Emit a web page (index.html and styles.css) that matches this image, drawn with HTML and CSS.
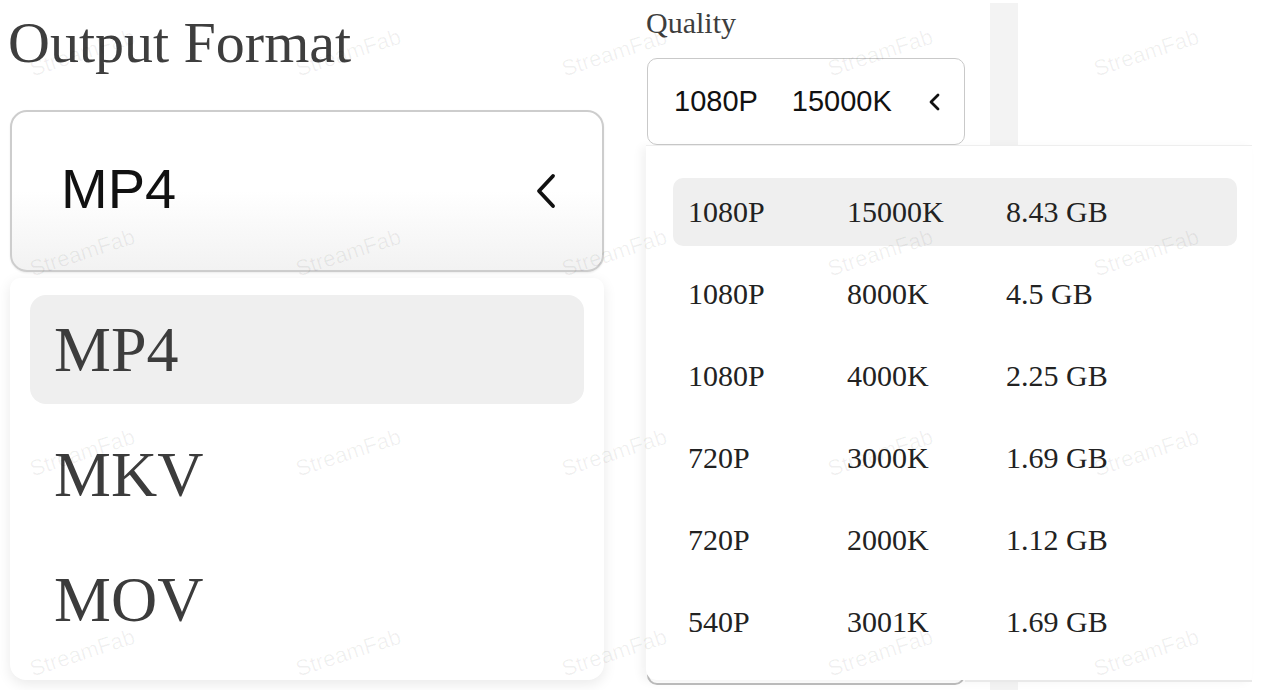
FILE: index.html
```html
<!DOCTYPE html>
<html lang="en">
<head>
<meta charset="utf-8">
<title>Output Format &amp; Quality</title>
<link rel="stylesheet" href="styles.css">
</head>
<body>
<div class="page">
  <section class="left">
    <h1 class="title">Output Format</h1>
    <div class="select big">
      <span class="value">MP4</span>
      <svg class="chev" width="22" height="36" viewBox="0 0 22 36"><polyline points="18,3 4,18 18,33" fill="none" stroke="#111" stroke-width="3.8" stroke-linecap="round" stroke-linejoin="round"/></svg>
    </div>
    <ul class="menu big-menu">
      <li class="opt active">MP4</li>
      <li class="opt">MKV</li>
      <li class="opt">MOV</li>
    </ul>
  </section>
  <section class="right">
    <div class="top-row">
      <div class="q-col">
        <h2 class="q-title">Quality</h2>
        <div class="select small">
          <span class="v1">1080P</span>
          <span class="v2">15000K</span>
          <svg class="chev-s" width="14" height="18" viewBox="0 0 14 18"><polyline points="11,2 4,9 11,16" fill="none" stroke="#111" stroke-width="2.8" stroke-linecap="round" stroke-linejoin="round"/></svg>
        </div>
      </div>
    </div>
    <ul class="menu q-menu">
      <li class="row active"><span>1080P</span><span>15000K</span><span>8.43 GB</span></li>
      <li class="row"><span>1080P</span><span>8000K</span><span>4.5 GB</span></li>
      <li class="row"><span>1080P</span><span>4000K</span><span>2.25 GB</span></li>
      <li class="row"><span>720P</span><span>3000K</span><span>1.69 GB</span></li>
      <li class="row"><span>720P</span><span>2000K</span><span>1.12 GB</span></li>
      <li class="row"><span>540P</span><span>3001K</span><span>1.69 GB</span></li>
    </ul>
  </section>
  <div class="watermarks" aria-hidden="true">
    <span>StreamFab</span><span>StreamFab</span><span>StreamFab</span><span>StreamFab</span><span>StreamFab</span>
    <span>StreamFab</span><span>StreamFab</span><span>StreamFab</span><span>StreamFab</span><span>StreamFab</span>
    <span>StreamFab</span><span>StreamFab</span><span>StreamFab</span><span>StreamFab</span><span>StreamFab</span>
    <span>StreamFab</span><span>StreamFab</span><span>StreamFab</span><span>StreamFab</span><span>StreamFab</span>
  </div>
</div>
</body>
</html>
```

FILE: styles.css
```css
html, body {
  margin: 0;
  padding: 0;
  background: #fff;
}
body {
  width: 1271px;
  height: 690px;
  overflow: hidden;
}
.page {
  position: relative;
  display: flex;
  width: 1271px;
  height: 690px;
  overflow: hidden;
}
ul { list-style: none; margin: 0; padding: 0; }

/* ---------- left ---------- */
.left {
  width: 620px;
  flex: none;
}
.title {
  margin: 14px 0 0 8px;
  font: normal 58px/58px "Liberation Serif", "Times New Roman", serif;
  color: #3e3e3e;
}
.select {
  box-sizing: border-box;
  display: flex;
  align-items: center;
  background: #fff;
  font-family: "Liberation Sans", Arial, sans-serif;
  color: #111;
}
.select.big {
  margin: 38px 0 0 10px;
  width: 594px;
  height: 162px;
  border: 2px solid #cdcdcd;
  border-radius: 17px;
  padding: 0 45px 4px 49px;
  justify-content: space-between;
  background: linear-gradient(#fff 50%, #f2f2f2 100%);
  box-shadow: 0 1px 2px rgba(0,0,0,0.08);
}
.select.big .value {
  font-size: 56px;
  line-height: 56px;
}
.chev { display: block; margin-top: 4px; }

.big-menu {
  box-sizing: border-box;
  margin: 6px 0 0 10px;
  width: 594px;
  height: 402px;
  padding: 17px 20px 0;
  background: #fff;
  border-radius: 10px 10px 16px 16px;
  box-shadow: 0 4px 14px rgba(0,0,0,0.09);
  display: flex;
  flex-direction: column;
  gap: 16px;
}
.opt {
  height: 109px;
  border-radius: 16px;
  display: flex;
  align-items: center;
  padding-left: 24px;
  font: normal 64px/64px "Liberation Serif", "Times New Roman", serif;
  color: #3c3c3c;
}
.opt.active { background: #efefef; }

/* ---------- right ---------- */
.right {
  position: relative;
  flex: 1;
  padding-left: 26px;
}
.right::before {
  content: "";
  position: absolute;
  left: 370px;
  top: 3px;
  width: 28px;
  bottom: 0;
  background: #f3f3f3;
}
.right::after {
  content: "";
  position: absolute;
  left: 27px;
  top: 665px;
  width: 318px;
  height: 20px;
  box-sizing: border-box;
  border: 2px solid #bdbdbd;
  border-top: none;
  border-radius: 0 0 10px 10px;
  background: #fff;
}
.top-row {
  position: relative;
  display: flex;
}
.q-col { width: 320px; }
.q-title {
  margin: 8px 0 0 0;
  font: normal 30px/30px "Liberation Serif", "Times New Roman", serif;
  color: #3e3e3e;
}
.select.small {
  margin: 20px 0 0 1px;
  width: 318px;
  height: 87px;
  border: 1.5px solid #c9c9c9;
  border-radius: 10px;
  padding: 0 0 0 26px;
  font-size: 29px;
  line-height: 29px;
}
.v2 { margin-left: 34px; }
.chev-s { margin-left: 35px; display: block; }

.q-menu {
  position: relative;
  z-index: 1;
  box-sizing: border-box;
  width: 606px;
  height: 535px;
  padding: 32px 15px 0 27px;
  background: #fff;
  border-top: 1px solid #eeeeee;
  border-radius: 0 0 4px 10px;
  box-shadow: -5px 2px 10px rgba(0,0,0,0.05);
  display: flex;
  flex-direction: column;
  gap: 14px;
}
.q-menu::before {
  content: "";
  position: absolute;
  left: 319px;
  right: 0;
  bottom: -2px;
  height: 2px;
  background: #e9e9e9;
}
.row {
  height: 68px;
  border-radius: 10px;
  display: grid;
  grid-template-columns: 159px 159px auto;
  align-items: center;
  padding-left: 15px;
  font: normal 30px/30px "Liberation Serif", "Times New Roman", serif;
  color: #222;
}
.row.active { background: #efefef; }

/* ---------- watermarks ---------- */
.watermarks {
  position: absolute;
  z-index: 5;
  left: -51px;
  top: -47px;
  display: grid;
  grid-template-columns: repeat(5, 266px);
  grid-template-rows: repeat(4, 200px);
  place-items: center;
  pointer-events: none;
}
.watermarks span {
  display: block;
  transform: rotate(-18deg);
  font: normal 22px/22px "Liberation Sans", Arial, sans-serif;
  color: rgba(0,0,0,0.06);
}
```
